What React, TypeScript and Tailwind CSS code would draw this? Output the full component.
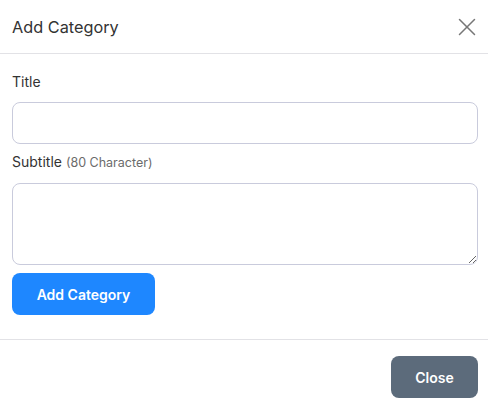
import { X } from "lucide-react";

export default function App() {
  return (
    <div className="w-[488px] h-[410px] bg-white font-['Inter','Noto_Sans',sans-serif] text-[#333]">
      {/* header */}
      <div className="flex items-center justify-between h-[54px] pl-3 pr-[6px] border-b border-[#e2e2e6]">
        <h2 className="text-[16.3px] leading-6 text-[#333]">Add Category</h2>
        <button className="text-[#777]">
          <X size={30} strokeWidth={1.2} />
        </button>
      </div>

      {/* body */}
      <div className="pl-3 pr-[10px] pt-[18px] pb-[24px] border-b border-[#e2e2e6]">
        <label className="block text-[14px] leading-5 mb-[10px]">Title</label>
        <input
          type="text"
          className="block w-full h-[42px] rounded-lg border border-[#c9cbdc] px-3 text-[14px] outline-none"
        />

        <label className="block text-[14px] leading-5 mt-[8px] mb-[10px]">
          Subtitle <span className="text-[12.5px] text-[#6b6b6b]">(80 Character)</span>
        </label>
        <textarea className="block w-full h-[82px] rounded-lg border border-[#c9cbdc] px-3 py-2 text-[14px] outline-none" />

        <button className="mt-[8px] h-[42px] w-[143px] rounded-lg bg-[#1e87ff] text-white text-[14px] font-semibold">
          Add Category
        </button>
      </div>

      {/* footer */}
      <div className="flex justify-end pt-4 pr-[10px]">
        <button className="h-[42px] w-[87px] rounded-lg bg-[#5c6b7b] text-white text-[14px] font-semibold">
          Close
        </button>
      </div>
    </div>
  );
}
